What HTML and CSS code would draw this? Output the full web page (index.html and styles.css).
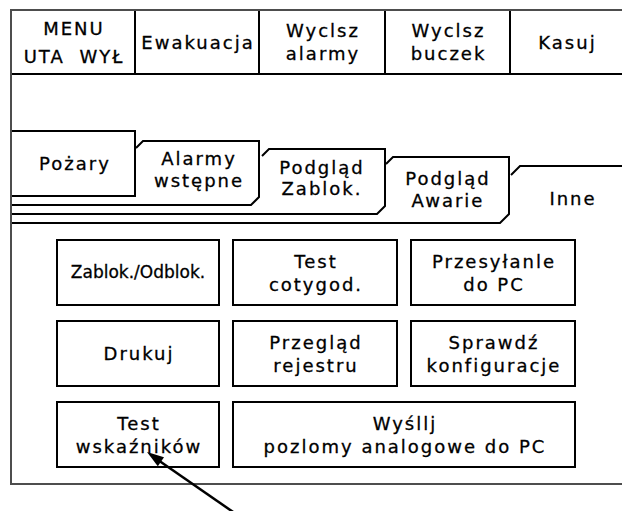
FILE: index.html
```html
<!DOCTYPE html>
<html lang="pl">
<head>
<meta charset="utf-8">
<title>Inne</title>
<link rel="stylesheet" href="styles.css">
</head>
<body>
<div class="frame">
  <div class="topbar">
    <div class="cell c1 menu">MENU<br>UTA WYŁ</div>
    <div class="cell c2">Ewakuacja</div>
    <div class="cell c3">Wyclsz<br>alarmy</div>
    <div class="cell c4">Wyclsz<br>buczek</div>
    <div class="cell c5">Kasuj</div>
  </div>
  <svg class="tabs" width="610" height="149" viewBox="12 75 610 149" xmlns="http://www.w3.org/2000/svg">
    <g class="tab-lines">
      <polyline points="511,175 520,166 623,166"/>
      <polyline points="12,223 500,223 509,214 509,157 393,157 386,164"/>
      <polyline points="12,214 377,214 385,206 385,149 269,149 262,156"/>
      <polyline points="12,205 251,205 259,197 259,141 143,141 136,148"/>
      <polyline points="12,196 135,196 135,131 12,131"/>
    </g>
    <g class="tab-label">
      <text x="75" y="170">Pożary</text>
      <text x="199" y="165">Alarmy</text>
      <text x="199" y="187">wstępne</text>
      <text x="322" y="174">Podgląd</text>
      <text x="322" y="195">Zablok.</text>
      <text x="448" y="185">Podgląd</text>
      <text x="448" y="207">Awarie</text>
      <text x="573" y="205">Inne</text>
    </g>
  </svg>
  <div class="content">
    <div class="grid">
      <div class="btn small">Zablok./Odblok.</div>
      <div class="btn">Test<br>cotygod.</div>
      <div class="btn">Przesyłanle<br>do PC</div>
      <div class="btn">Drukuj</div>
      <div class="btn">Przegląd<br>rejestru</div>
      <div class="btn">Sprawdź<br>konfiguracje</div>
      <div class="btn">Test<br>wskaźników</div>
      <div class="btn wide">Wyśllj<br>pozlomy analogowe do PC</div>
    </div>
  </div>
</div>
<svg class="arrow" width="622" height="511" viewBox="0 0 622 511" xmlns="http://www.w3.org/2000/svg">
  <line x1="158" y1="460" x2="236" y2="514"/>
  <polygon points="147,452 157.8,466.2 164,457.2"/>
</svg>
</body>
</html>
```

FILE: styles.css
```css
html, body {
  margin: 0;
  padding: 0;
  background: #fff;
}

body {
  position: relative;
  width: 622px;
  height: 511px;
  overflow: hidden;
  font-family: "DejaVu Sans", "Noto Sans", sans-serif;
  color: #000;
  -webkit-text-stroke: 0.3px #000;
}

.frame {
  box-sizing: border-box;
  margin: 9px 0 0 10px;
  width: 612px;
  height: 476px;
  border: 2px solid #4d4d4d;
  border-right: none;
  display: flex;
  flex-direction: column;
}

.topbar {
  box-sizing: border-box;
  display: flex;
  height: 64px;
  border-bottom: 2px solid #000;
}

.cell {
  box-sizing: border-box;
  display: flex;
  align-items: center;
  justify-content: center;
  text-align: center;
  border-right: 2px solid #000;
  font-size: 18px;
  letter-spacing: 2px;
  line-height: 23px;
  padding-left: 2px;
}

.c1 { width: 124px; }
.c2 { width: 124px; }
.c3 { width: 126px; }
.c4 { width: 125px; }
.c5 { flex: 1; border-right: none; }

.menu {
  line-height: 28px;
  word-spacing: 7px;
  padding-top: 2px;
}

.tabs {
  display: block;
  flex: none;
}

.tab-lines polyline {
  fill: none;
  stroke: #000;
  stroke-width: 2;
}

.tab-label text {
  font-family: "DejaVu Sans", "Noto Sans", sans-serif;
  font-size: 18px;
  letter-spacing: 2px;
  text-anchor: middle;
  fill: #000;
  stroke: #000;
  stroke-width: 0.3px;
}

.content {
  flex: 1;
  padding: 15px 0 0 44px;
}

.grid {
  display: grid;
  grid-template-columns: 164px 166px 166px;
  grid-template-rows: repeat(3, 67px);
  column-gap: 12px;
  row-gap: 14px;
}

.btn {
  box-sizing: border-box;
  border: 2px solid #000;
  display: flex;
  align-items: center;
  justify-content: center;
  text-align: center;
  font-size: 18px;
  letter-spacing: 2px;
  line-height: 23px;
  padding-left: 2px;
  white-space: nowrap;
}

.btn.small {
  font-size: 17px;
  letter-spacing: 0;
  padding-left: 0;
}

.btn.wide {
  grid-column: span 2;
}

.arrow {
  position: absolute;
  left: 0;
  top: 0;
  pointer-events: none;
}

.arrow line {
  stroke: #000;
  stroke-width: 2.5;
}

.arrow polygon {
  fill: #000;
}
```
